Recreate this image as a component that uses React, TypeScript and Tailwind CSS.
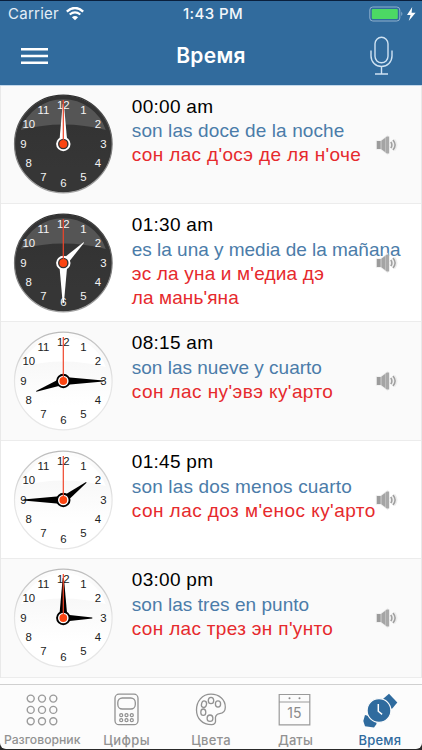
import React from "react";

type Row = {
  time: string;
  es: string;
  ru: string[];
  hour: number;
  minute: number;
  dark: boolean;
  height: string;
  esSpacing: string;
  ruSpacing: string[];
};

const rows: Row[] = [
  { time: "00:00 am", es: "son las doce de la noche", ru: ["сон лас д'осэ де ля н'оче"], hour: 0, minute: 0, dark: true, height: "h-[118px]", esSpacing: "tracking-[0.1px]", ruSpacing: ["tracking-[0.34px]"] },
  { time: "01:30 am", es: "es la una y media de la mañana", ru: ["эс ла уна и м'едиа дэ", "ла мань'яна"], hour: 45, minute: 180, dark: true, height: "h-[118px]", esSpacing: "tracking-[-0.02px]", ruSpacing: ["tracking-[0.18px]", "tracking-[0.1px]"] },
  { time: "08:15 am", es: "son las nueve y cuarto", ru: ["сон лас ну'эвэ ку'арто"], hour: 249, minute: 90, dark: false, height: "h-[119px]", esSpacing: "tracking-[0px]", ruSpacing: ["tracking-[0.42px]"] },
  { time: "01:45 pm", es: "son las dos menos cuarto", ru: ["сон лас доз м'енос ку'арто"], hour: 52.5, minute: 270, dark: false, height: "h-[118px]", esSpacing: "tracking-[0.15px]", ruSpacing: ["tracking-[0.44px]"] },
  { time: "03:00 pm", es: "son las tres en punto", ru: ["сон лас трез эн п'унто"], hour: 90, minute: 0, dark: false, height: "h-[119px]", esSpacing: "tracking-[0.05px]", ruSpacing: ["tracking-[0.32px]"] },
];

function Clock({ hour, minute, dark, id }: { hour: number; minute: number; dark: boolean; id: string }) {
  const ink = dark ? "#ffffff" : "#000000";
  return (
    <svg width="102" height="102" viewBox="-51.3 -51 102 102" className="shrink-0">
      <defs>
        <linearGradient id={`rim-${id}`} x1="0" y1="0" x2="0" y2="1">
          <stop offset="0" stopColor={dark ? "#303030" : "#bcbcbc"} />
          <stop offset="0.5" stopColor={dark ? "#777777" : "#e5e5e5"} />
          <stop offset="1" stopColor={dark ? "#a5a5a5" : "#e7e7e7"} />
        </linearGradient>
        <linearGradient id={`face-${id}`} x1="0" y1="0" x2="0" y2="1">
          <stop offset="0" stopColor={dark ? "#333333" : "#fdfdfd"} />
          <stop offset="0.3" stopColor={dark ? "#333333" : "#f8f8f8"} />
          <stop offset="0.75" stopColor={dark ? "#363636" : "#ffffff"} />
        </linearGradient>
      </defs>
      <circle r="48.8" fill={`url(#face-${id})`} stroke={`url(#rim-${id})`} strokeWidth="1.2" />
      <path d="M-42.500 -14 A44.750 44.750 0 0 1 42.500 -14 Q0 -25 -42.500 -14Z" fill={dark ? "#555555" : "#ffffff"} />
      <g fill={dark ? "#f4f4f4" : "#222222"} fontFamily="'Liberation Sans', sans-serif" fontSize="11.4" textAnchor="middle">
        {Array.from({ length: 12 }, (_, i) => {
          const a = ((i + 1) * Math.PI) / 6;
          return (
            <text key={i} x={(40 * Math.sin(a)).toFixed(1)} y={(-39 * Math.cos(a) + 3.6).toFixed(1)}>
              {i + 1}
            </text>
          );
        })}
      </g>
      <path d="M-3.800 -4 L-0.600 -40 H0.600 L3.800 -4Z" fill={ink} transform={`rotate(${minute})`} />
      <path d="M-3.200 -4 L-0.400 -29 H0.400 L3.200 -4Z" fill={ink} transform={`rotate(${hour})`} />
      <circle r="7.2" fill={ink} />
      <circle r="5.3" fill={dark ? "#333333" : "#ffffff"} />
      <path d="M0 0V-44" stroke="#f0452a" strokeWidth="1.200" />
      <circle r="3.900" fill="#fb4512" />
    </svg>
  );
}

function Speaker() {
  return (
    <svg width="26" height="22" viewBox="0 0 26 22" className="block">
      <g stroke="#eeeeee" strokeWidth="2.4" fill="#eeeeee">
        <path d="M3 7.500h4l6-4.500v16L7 14.500H3z" />
        <path d="M17 7.800q2.200 3.200 0 6.400M19.500 6q4 5 0 10" fill="none" strokeWidth="4" />
      </g>
      <path d="M2.800 7h3.900v8H2.800z" fill="#9b9b9b" />
      <path d="M7.300 6.800 11 4v14L7.300 15.200z" fill="#a4a4a4" />
      <path d="M11.300 3.800 12.800 2.500h2.400v17h-2.400L11.300 18.200z" fill="#a9a9a9" />
      <path d="M16.800 7.800q2.200 3.200 0 6.400M19 6q4.200 5 0 10" fill="none" stroke="#9f9f9f" strokeWidth="1.500" />
    </svg>
  );
}

function PhraseRow({ row, index }: { row: Row; index: number }) {
  return (
    <li className={`relative flex shrink-0 border-b border-[#ececec] ${row.height} ${index % 2 ? "bg-white" : "bg-[#fafafa]"}`}>
      <div className={`w-[130.800px] shrink-0 pl-[11px] ${index === 0 ? "pt-[7px]" : "pt-[8px]"}`}>
        <Clock hour={row.hour} minute={row.minute} dark={row.dark} id={String(index)} />
      </div>
      <div className="pt-[8px] text-[19px] whitespace-nowrap">
        <p className={`leading-[25px] text-black ${index === 0 ? "h-[25px]" : "h-[26px]"}`}>
          <span className="tracking-[0.28px]">{row.time}</span>
        </p>
        <p className="h-[24px] leading-[24px] text-[#4b7ca9]">
          <span className={row.esSpacing}>{row.es}</span>
        </p>
        {row.ru.map((line, i) => (
          <p key={line} className="h-[24px] leading-[24px] text-[#e62a2d]">
            <span className={row.ruSpacing[i]}>{line}</span>
          </p>
        ))}
      </div>
      <button aria-label="play" className="absolute left-[372.500px] top-[47.500px]">
        <Speaker />
      </button>
    </li>
  );
}

function StatusBar() {
  return (
    <div className="flex h-[27px] items-center border-t border-[#0a1f3c] font-['Inter'] text-[15px] text-[#e4eef6]">
      <div className="flex w-[177px] items-center gap-[8px] pl-[8px]">
        <span className="w-[50px] pt-px tracking-[0.25px]">Carrier</span>
        <svg width="18" height="14" viewBox="0 0 18 14" fill="none" stroke="#fff">
          <path d="M0.8 4.600Q9 -2.700 17.200 4.600" strokeWidth="2.300" />
          <path d="M3.700 7.500Q9 3.100 14.300 7.500" strokeWidth="2.200" />
          <path d="M9 13.300 5.900 10.200Q9 7.800 12.100 10.200Z" fill="#fff" stroke="none" />
        </svg>
      </div>
      <span className="w-[72px] pt-px text-center font-medium tracking-[0.4px] whitespace-nowrap text-[#f2f7fb]">1:43 PM</span>
      <svg width="52" height="18" viewBox="0 0 52 18" className="ml-[118px]">
        <rect x="2.800" y="2" width="30" height="14" rx="3" fill="none" stroke="#8fb0ce" />
        <rect x="4.800" y="4" width="26" height="10" rx="1" fill="#4cd964" />
        <path d="M34.300 6.500q2.200 2.300 0 4.600z" fill="#8fb0ce" />
        <path d="M45.200 2 40 10h3.600L41.700 16 48.600 7.800h-4z" fill="#fff" />
      </svg>
    </div>
  );
}

function NavBar() {
  return (
    <div className="flex h-[57px] items-center justify-between pl-[21px] pr-[29px]">
      <svg width="27" height="16" viewBox="0 0 27 16" stroke="#fff" strokeWidth="2.600">
        <path d="M0 1.300h27M0 8h27M0 14.700h27" />
      </svg>
      <h1 className="pl-[4px] font-['Inter'] text-[21px] font-semibold leading-[26px] text-white">
        <span className="tracking-[0.3px]">Время</span>
      </h1>
      <svg width="23" height="40" viewBox="0 0 23 40" fill="none" stroke="#cfe2f2" strokeWidth="1.400">
        <rect x="5" y="1.300" width="13" height="25.500" rx="6.500" />
        <path d="M1 14.500v5.500a10.500 10.500 0 0 0 21 0v-5.500M11.500 30.500v7M5 38h13" />
      </svg>
    </div>
  );
}

function GridIcon() {
  return (
    <svg width="34" height="34" viewBox="0 0 34 34" fill="none" stroke="#9b9b9b" strokeWidth="1.400">
      {[5.600, 16.900, 28.200].map((y) =>
        [5.700, 17, 28.300].map((x) => <circle key={`${x}-${y}`} cx={x} cy={y} r="3.500" />),
      )}
    </svg>
  );
}

function CalculatorIcon() {
  return (
    <svg width="34" height="34" viewBox="0 0 34 34" fill="none" stroke="#929292" strokeWidth="1.300">
      <rect x="5" y="1.200" width="23" height="30.500" rx="4" />
      <rect x="7.800" y="5" width="17.500" height="11" rx="4.500" />
      {[22.200, 27.200].map((y) =>
        [11.200, 16.500, 21.800].map((x) => <circle key={`${x}-${y}`} cx={x} cy={y} r="1.500" />),
      )}
    </svg>
  );
}

function PaletteIcon() {
  return (
    <svg width="34" height="34" viewBox="0 0 34 34" fill="none" stroke="#929292" strokeWidth="1.300">
      <path d="M17 1.200C8 1.200 2.500 8.500 2.500 17S8.500 31.700 17.500 31.700c3 0 4.500-2 4-5-.6-3.700 1-5.500 4-6 3.800-.6 5.800-2.500 5.800-6.500C31.300 6.500 25 1.200 17 1.200Z" />
      <ellipse cx="10" cy="11.200" rx="2.500" ry="3.300" transform="rotate(15 10 11.200)" />
      <ellipse cx="17" cy="7.500" rx="2.700" ry="3.200" />
      <ellipse cx="24" cy="11" rx="2.600" ry="3.100" />
      <ellipse cx="9.300" cy="19.200" rx="2.500" ry="3.200" />
      <ellipse cx="16" cy="25.200" rx="2.900" ry="3.200" />
    </svg>
  );
}

function CalendarIcon() {
  return (
    <svg width="34" height="34" viewBox="0 0 34 34" fill="none" stroke="#9a9a9a" strokeWidth="1.200">
      <path d="M1.200 1.500h30.600v30.400H1.200zM1.200 9h30.600" />
      <g fill="#8a8a8a" stroke="none">
        <circle cx="11.500" cy="5.300" r="1" />
        <circle cx="21.500" cy="5.300" r="1" />
        <text x="16.300" y="24.600" fontFamily="Inter, sans-serif" fontSize="14" fontWeight="400" textAnchor="middle">15</text>
      </g>
    </svg>
  );
}

function WatchIcon() {
  return (
    <svg width="36" height="36" viewBox="0 0 36 36">
      <path d="M20.500 8 21.500 5.500 27 0.800 35.300 9.500 30.300 15.500 27 16Z" fill="#2f6b9e" />
      <path d="M3 22 1.300 28 3 33.300 12 34.600 14.500 31 14 25Z" fill="#2f6b9e" />
      <circle cx="17" cy="17.500" r="11.900" fill="#2f6b9e" stroke="#fcfcfc" strokeWidth="1.200" />
      <path d="M16.300 11v7.200l3.800 3.200" fill="none" stroke="#fff" strokeWidth="1.500" />
    </svg>
  );
}

const tabs = [
  { label: "Разговорник", icon: <GridIcon />, active: false, text: "text-[12.200px]" },
  { label: "Цифры", icon: <CalculatorIcon />, active: false, text: "text-[13px] tracking-[0.400px]" },
  { label: "Цвета", icon: <PaletteIcon />, active: false, text: "text-[13px] tracking-[0.300px]" },
  { label: "Даты", icon: <CalendarIcon />, active: false, text: "text-[13px] tracking-[0.100px]" },
  { label: "Время", icon: <WatchIcon />, active: true, text: "text-[13px] tracking-[0.200px]" },
];

export default function App() {
  return (
    <div className="flex h-[750px] w-[422px] flex-col overflow-hidden bg-[#292929] font-['Liberation_Sans',sans-serif]">
      <header className="h-[85px] shrink-0 bg-[#316b9d]">
        <StatusBar />
        <NavBar />
      </header>
      <main className="h-[599px] shrink-0 overflow-hidden border-t border-[#c3d8eb] bg-[#fdfdfd]">
        <ul className="flex flex-col border-x border-[#e9e9e9]">
          {rows.map((row, i) => (
            <PhraseRow key={row.time} row={row} index={i} />
          ))}
        </ul>
      </main>
      <nav className="grid h-[65px] shrink-0 grid-cols-5 rounded-b-[6px] border-t border-[#d0d0d0] bg-[#fcfcfc]">
        {tabs.map((tab) => (
          <a key={tab.label} className={`flex flex-col items-center pt-[8px] font-['Inter'] font-medium ${tab.active ? "text-[#2f6b9e]" : "text-[#929292]"}`}>
            <span className="flex h-[35px] items-start">{tab.icon}</span>
            <span className={`mt-[4px] h-[16px] leading-[16px] whitespace-nowrap ${tab.text}`}>{tab.label}</span>
          </a>
        ))}
      </nav>
    </div>
  );
}
